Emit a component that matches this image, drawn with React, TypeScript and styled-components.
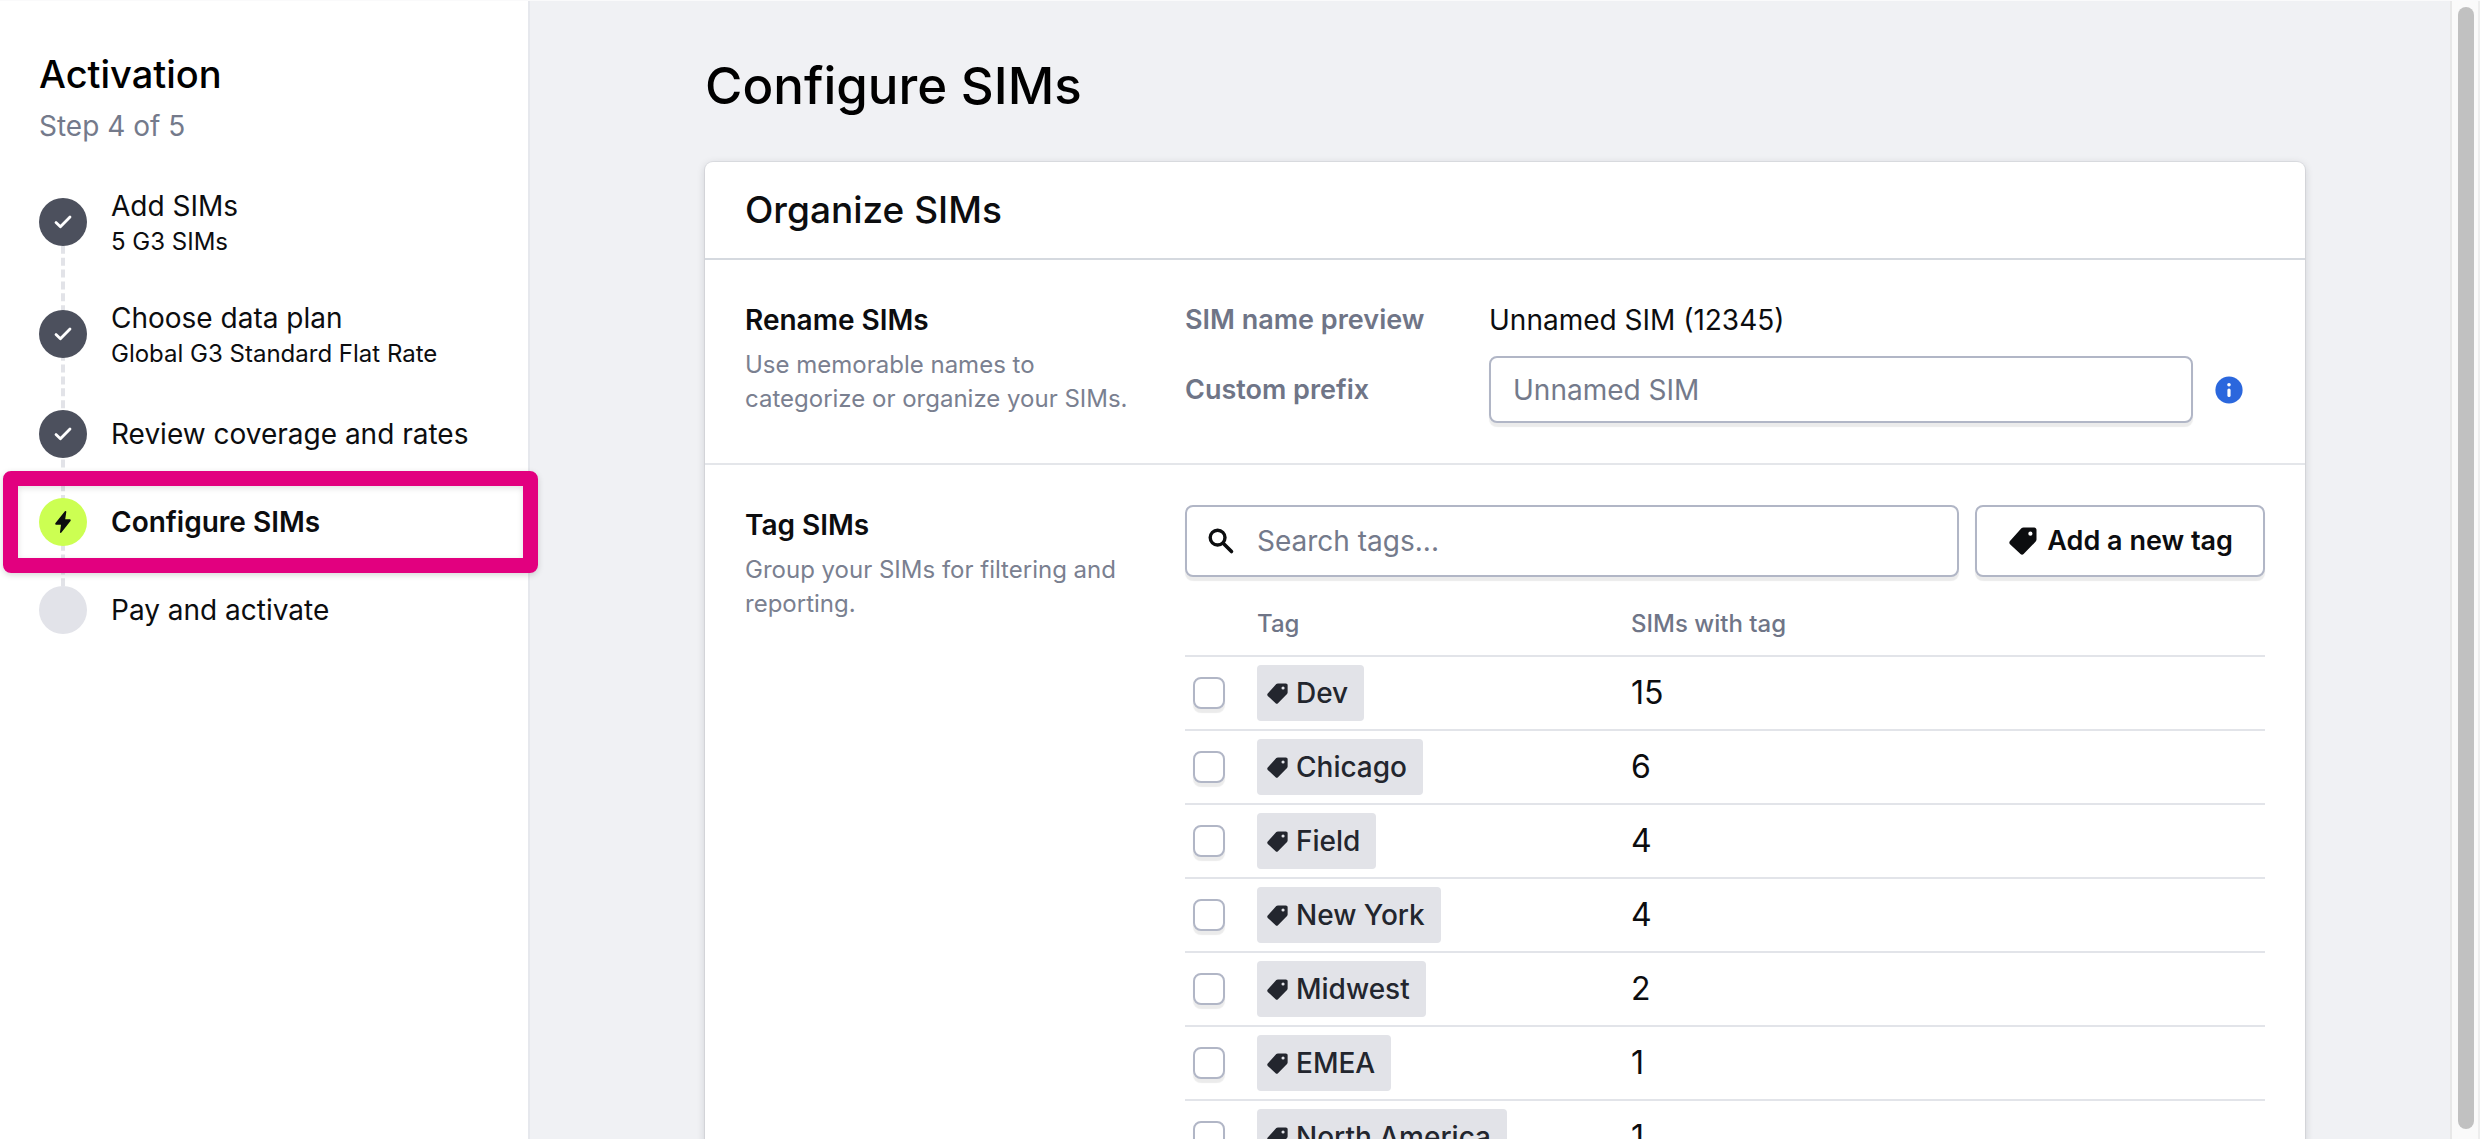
import React from "react";
import styled, { createGlobalStyle } from "styled-components";

const sans = `Inter, "Liberation Sans", sans-serif`;

const GlobalStyle = createGlobalStyle`
  *, *::before, *::after { box-sizing: border-box; }
  html, body, #root { height: 100%; }
  body {
    margin: 0;
    overflow: hidden;
    background: #f0f1f4;
    color: #0c0d0f;
    font-family: ${sans};
    font-size: 28px;
    line-height: 40px;
  }
  button, input { font: inherit; color: inherit; }
  h1, h2, h3, p, ol, dl { margin: 0; padding: 0; }
`;

const Page = styled.div`
  display: flex;
  height: 100%;
  border-top: 1px solid #fafafb;
`;

const Sidebar = styled.aside`
  position: relative;
  z-index: 1;
  flex: 0 0 530px;
  padding: 48px 40px 0 39px;
  background: #ffffff;
  border-right: 2px solid #e6e8ed;
`;

const SidebarTitle = styled.h2`
  font-size: 38px;
  font-weight: 500;
  line-height: 50px;
  color: #000000;
`;

const Progress = styled.p`
  margin-top: 7px;
  color: #747a8b;
`;

const StepList = styled.ol`
  position: relative;
  display: flex;
  flex-direction: column;
  gap: 40px;
  margin-top: 40px;
  list-style: none;

  &::before {
    content: "";
    position: absolute;
    top: 36px;
    bottom: 24px;
    left: 22px;
    border-left: 4px dashed #e2e3e8;
  }
`;

const StepItem = styled.li`
  position: relative;
  display: flex;
  align-items: center;
  gap: 24px;
  min-height: 48px;
`;

type StepState = "done" | "current" | "todo";

const stepColors: Record<StepState, string> = {
  done: "#4c505d",
  current: "#ccff52",
  todo: "#e2e3e9",
};

const StepMarker = styled.span<{ $state: StepState }>`
  display: flex;
  flex: none;
  align-items: center;
  justify-content: center;
  width: 48px;
  height: 48px;
  border-radius: 50%;
  background: ${(p) => stepColors[p.$state]};
`;

const StepTitle = styled.div<{ $current: boolean }>`
  font-weight: ${(p) => (p.$current ? 600 : 400)};
`;

const StepDetail = styled.div`
  font-size: 24px;
  line-height: 32px;
`;

const Highlight = styled.span`
  position: absolute;
  inset: -27px -50px -27px -36px;
  border: 15px solid #e2007f;
  border-radius: 8px;
  box-shadow: 0 2px 6px rgba(0, 0, 0, 0.16), inset 0 2px 6px rgba(0, 0, 0, 0.12);
  pointer-events: none;
`;

const Main = styled.main`
  flex: 1;
  min-width: 0;
  padding: 49px 40px 0;
`;

const Content = styled.div`
  max-width: 1600px;
  margin: 0 auto;
`;

const PageTitle = styled.h1`
  font-size: 51px;
  font-weight: 500;
  line-height: 72px;
  color: #000000;
`;

const Card = styled.section`
  margin-top: 40px;
  background: #ffffff;
  border-radius: 8px;
  box-shadow: 0 0 0 1px rgba(20, 24, 40, 0.06), 0 2px 8px rgba(20, 24, 40, 0.16);
`;

const CardTitle = styled.h2`
  padding: 24px 40px;
  border-bottom: 2px solid #d5d9df;
  font-size: 37px;
  font-weight: 500;
  line-height: 48px;
`;

const Section = styled.div`
  display: grid;
  grid-template-columns: 400px minmax(0, 1fr);
  gap: 40px;
  padding: 40px;

  & + & {
    border-top: 2px solid #e4e6ea;
  }
`;

const SectionTitle = styled.h3`
  font-size: 28px;
  font-weight: 600;
`;

const SectionText = styled.p`
  margin-top: 8px;
  font-size: 24px;
  line-height: 34px;
  color: #7a8090;
`;

const Fields = styled.div`
  display: grid;
  grid-template-columns: 304px minmax(0, 1fr) 72px;
  row-gap: 16px;
  align-items: center;
`;

const FieldLabel = styled.label`
  font-size: 27px;
  font-weight: 600;
  color: #6f7587;
`;

const FieldValue = styled.output`
  grid-column: span 2;
`;

const boxed = `
  border: 2px solid #b1b6c6;
  background: #ffffff;
  box-shadow: 0 4px 1px rgba(0, 0, 0, 0.08);
`;

const TextInput = styled.input`
  ${boxed}
  width: 100%;
  height: 67px;
  padding: 0 22px;
  border-radius: 8px;

  &::placeholder { color: #747a8b; opacity: 1; }
`;

const InfoButton = styled.button`
  display: flex;
  justify-content: center;
  padding: 0;
  border: 0;
  background: none;
`;

const Toolbar = styled.div`
  display: flex;
  gap: 16px;
`;

const SearchBox = styled.label`
  ${boxed}
  display: flex;
  flex: 1;
  align-items: center;
  gap: 22px;
  height: 72px;
  padding: 0 20px;
  border-radius: 8px;
`;

const SearchInput = styled.input`
  flex: 1;
  min-width: 0;
  padding: 0;
  border: 0;
  outline: 0;
  background: none;

  &::placeholder { color: #747a8b; opacity: 1; }
`;

const AddButton = styled.button`
  ${boxed}
  display: flex;
  align-items: center;
  gap: 10px;
  height: 72px;
  padding: 0 30px 0 32px;
  border-radius: 8px;
  font-size: 27px;
  font-weight: 600;
`;

const TagTable = styled.table`
  width: 100%;
  margin-top: 16px;
  border-collapse: separate;
  border-spacing: 0;
  table-layout: fixed;
`;

const HeadCell = styled.th<{ $width?: number }>`
  width: ${(p) => (p.$width ? `${p.$width}px` : "auto")};
  height: 64px;
  padding: 0;
  border-bottom: 2px solid #e2e4e9;
  color: #6f7587;
  font-size: 24px;
  font-weight: 500;
  line-height: 32px;
  text-align: left;
`;

const Cell = styled.td`
  height: 74px;
  padding: 0;
  border-bottom: 2px solid #e2e4e9;
  font-size: 32px;
`;

const Checkbox = styled.input`
  ${boxed}
  display: block;
  appearance: none;
  width: 32px;
  height: 32px;
  margin: 0 0 0 8px;
  border-radius: 8px;

  &:checked { background: #4c505d; }
`;

const Chip = styled.span`
  display: flex;
  align-items: center;
  gap: 8px;
  width: fit-content;
  height: 56px;
  padding: 0 16px 0 10px;
  border-radius: 4px;
  background: #e2e3e8;
  color: #23262e;
  font-size: 28px;
  font-weight: 500;
`;

const ScrollTrack = styled.div`
  position: fixed;
  z-index: 2;
  top: 1px;
  right: 0;
  bottom: 0;
  width: 30px;
  padding: 6px 6px 10px;
  border-left: 2px solid #e8e8e8;
  border-right: 2px solid #ededed;
  background: #fafafa;
`;

const ScrollThumb = styled.div`
  width: 16px;
  height: 100%;
  border-radius: 8px;
  background: #c1c1c1;
`;

const CheckIcon = () => (
  <svg width="18" height="14" viewBox="0 0 18 14" fill="none" aria-hidden="true">
    <path d="M2 7.6 6.4 11.8 16 2" stroke="#fff" strokeWidth="2.8" strokeLinecap="round" strokeLinejoin="round" />
  </svg>
);

const BoltIcon = () => (
  <svg width="16" height="22" viewBox="0 0 16 22" fill="#0c0d0f" aria-hidden="true">
    <path d="M9.900.3c.7-.6 1.600-.1 1.400.8L10.200 8.200h4.400c1 0 1.500 1 .9 1.700L6.400 21.600c-.6.7-1.600.2-1.400-.7l1-7.100H1.400c-1 0-1.500-1-.9-1.700z" />
  </svg>
);

const TagIcon = ({ size }: { size: number }) => (
  <svg width={size} height={size} viewBox="0 0 28 28" fill="currentColor" aria-hidden="true">
    <path
      fillRule="evenodd"
      d="M14.500.5h10.700c1.300 0 2.300 1 2.300 2.300v9.700c0 .8-.3 1.500-.8 2.100L14.600 27c-.9.9-2.200.9-3.100 0L1 17.200c-.9-.9-.9-2.200 0-3.100L12.400 1.300c.6-.5 1.300-.8 2.100-.8zM21.400 4.600a2.100 2.100 0 1 0 0 4.200 2.100 2.100 0 0 0 0-4.200z"
    />
  </svg>
);

const SearchIcon = () => (
  <svg width="28" height="28" viewBox="0 0 28 28" fill="none" stroke="#0c0d0f" aria-hidden="true">
    <circle cx="10.600" cy="10.600" r="7.400" strokeWidth="3.400" />
    <path d="M16.200 16.200 24.500 24.500" strokeWidth="3.600" strokeLinecap="round" />
  </svg>
);

const InfoIcon = () => (
  <svg width="28" height="28" viewBox="0 0 28 28" aria-hidden="true">
    <circle cx="14" cy="14" r="13.600" fill="#2b67dd" />
    <circle cx="14" cy="8.800" r="1.800" fill="#fff" />
    <path d="M14 14v5.400" stroke="#fff" strokeWidth="3.200" strokeLinecap="round" />
  </svg>
);

const steps: { title: string; detail?: string; state: StepState }[] = [
  { title: "Add SIMs", detail: "5 G3 SIMs", state: "done" },
  { title: "Choose data plan", detail: "Global G3 Standard Flat Rate", state: "done" },
  { title: "Review coverage and rates", state: "done" },
  { title: "Configure SIMs", state: "current" },
  { title: "Pay and activate", state: "todo" },
];

const tags = [
  { name: "Dev", count: 15 },
  { name: "Chicago", count: 6 },
  { name: "Field", count: 4 },
  { name: "New York", count: 4 },
  { name: "Midwest", count: 2 },
  { name: "EMEA", count: 1 },
  { name: "North America", count: 1 },
];

export default function App() {
  return (
    <>
      <GlobalStyle />
      <Page>
        <Sidebar>
          <SidebarTitle>Activation</SidebarTitle>
          <Progress>Step 4 of 5</Progress>
          <StepList>
            {steps.map((step) => (
              <StepItem key={step.title}>
                <StepMarker $state={step.state}>
                  {step.state === "done" && <CheckIcon />}
                  {step.state === "current" && <BoltIcon />}
                </StepMarker>
                <div>
                  <StepTitle $current={step.state === "current"}>{step.title}</StepTitle>
                  {step.detail && <StepDetail>{step.detail}</StepDetail>}
                </div>
                {step.state === "current" && <Highlight />}
              </StepItem>
            ))}
          </StepList>
        </Sidebar>
        <Main>
          <Content>
            <PageTitle>Configure SIMs</PageTitle>
            <Card>
              <CardTitle>Organize SIMs</CardTitle>
              <Section>
                <div>
                  <SectionTitle>Rename SIMs</SectionTitle>
                  <SectionText>Use memorable names to categorize or organize your SIMs.</SectionText>
                </div>
                <Fields>
                  <FieldLabel htmlFor="preview">SIM name preview</FieldLabel>
                  <FieldValue id="preview">Unnamed SIM (12345)</FieldValue>
                  <FieldLabel htmlFor="prefix">Custom prefix</FieldLabel>
                  <TextInput id="prefix" type="text" placeholder="Unnamed SIM" />
                  <InfoButton type="button" aria-label="About custom prefix">
                    <InfoIcon />
                  </InfoButton>
                </Fields>
              </Section>
              <Section>
                <div>
                  <SectionTitle>Tag SIMs</SectionTitle>
                  <SectionText>Group your SIMs for filtering and reporting.</SectionText>
                </div>
                <div>
                  <Toolbar>
                    <SearchBox>
                      <SearchIcon />
                      <SearchInput type="text" placeholder="Search tags..." aria-label="Search tags" />
                    </SearchBox>
                    <AddButton type="button">
                      <TagIcon size={28} />
                      Add a new tag
                    </AddButton>
                  </Toolbar>
                  <TagTable>
                    <thead>
                      <tr>
                        <HeadCell $width={72} aria-label="Selected" />
                        <HeadCell $width={374}>Tag</HeadCell>
                        <HeadCell>SIMs with tag</HeadCell>
                      </tr>
                    </thead>
                    <tbody>
                      {tags.map((tag) => (
                        <tr key={tag.name}>
                          <Cell>
                            <Checkbox type="checkbox" aria-label={tag.name} />
                          </Cell>
                          <Cell>
                            <Chip>
                              <TagIcon size={21} />
                              {tag.name}
                            </Chip>
                          </Cell>
                          <Cell>{tag.count}</Cell>
                        </tr>
                      ))}
                    </tbody>
                  </TagTable>
                </div>
              </Section>
            </Card>
          </Content>
        </Main>
        <ScrollTrack>
          <ScrollThumb />
        </ScrollTrack>
      </Page>
    </>
  );
}
